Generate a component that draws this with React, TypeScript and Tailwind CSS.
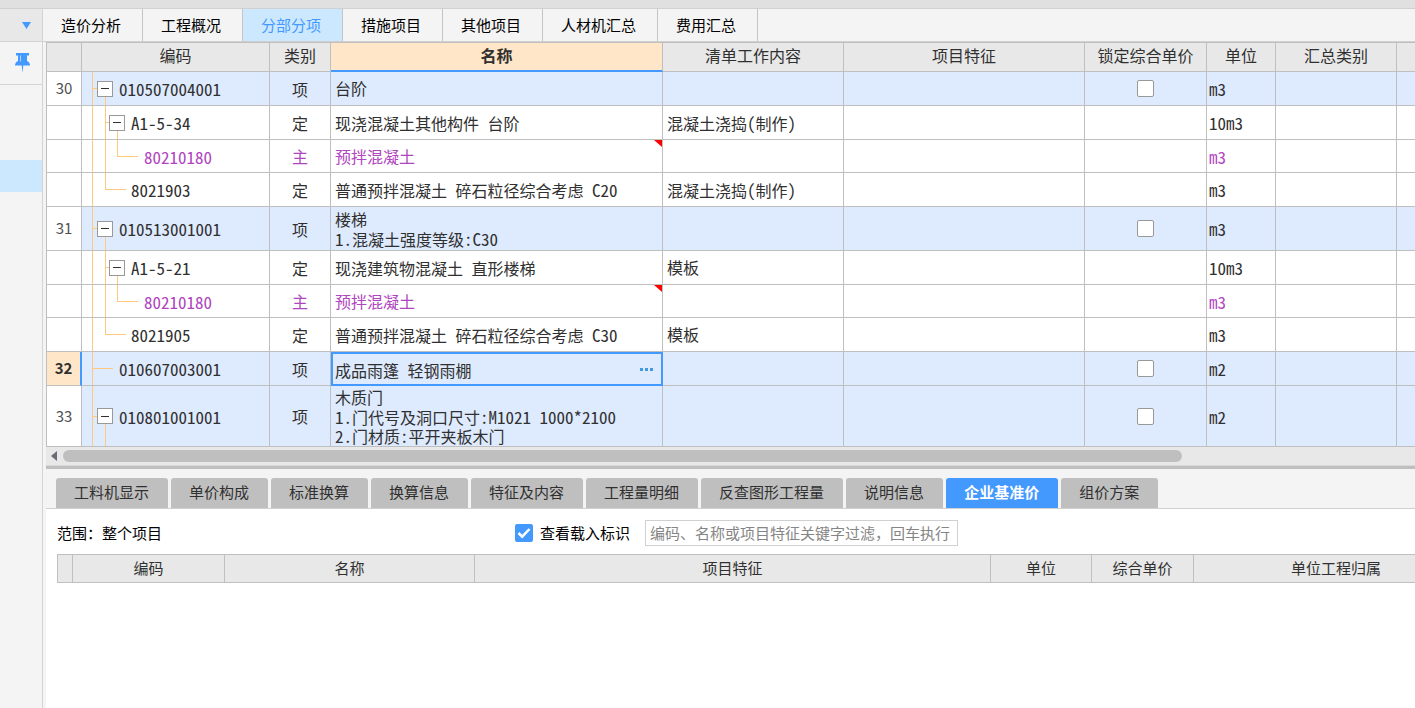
import { useState } from 'react';
import clsx from 'clsx';

interface BillRow {
  no?: string;
  code: string;
  level: 0 | 1 | 2;
  leaf?: boolean;
  last?: boolean;
  type: string;
  name: string[];
  work?: string;
  unit: string;
  flagged?: boolean;
  height: string;
}

const rows: BillRow[] = [
  { no: '30', code: '010507004001', level: 0, type: '项', name: ['台阶'], unit: 'm3', height: 'h-[34px]' },
  { code: 'A1-5-34', level: 1, type: '定', name: ['现浇混凝土其他构件 台阶'], work: '混凝土浇捣(制作)', unit: '10m3', height: 'h-[34px]' },
  { code: '80210180', level: 2, leaf: true, last: true, type: '主', name: ['预拌混凝土'], unit: 'm3', flagged: true, height: 'h-[33px]' },
  { code: '8021903', level: 1, leaf: true, last: true, type: '定', name: ['普通预拌混凝土 碎石粒径综合考虑 C20'], work: '混凝土浇捣(制作)', unit: 'm3', height: 'h-[34px]' },
  { no: '31', code: '010513001001', level: 0, type: '项', name: ['楼梯', '1.混凝土强度等级:C30'], unit: 'm3', height: 'h-[44px]' },
  { code: 'A1-5-21', level: 1, type: '定', name: ['现浇建筑物混凝土 直形楼梯'], work: '模板', unit: '10m3', height: 'h-[34px]' },
  { code: '80210180', level: 2, leaf: true, last: true, type: '主', name: ['预拌混凝土'], unit: 'm3', flagged: true, height: 'h-[33px]' },
  { code: '8021905', level: 1, leaf: true, last: true, type: '定', name: ['普通预拌混凝土 碎石粒径综合考虑 C30'], work: '模板', unit: 'm3', height: 'h-[34px]' },
  { no: '32', code: '010607003001', level: 0, leaf: true, type: '项', name: ['成品雨篷 轻钢雨棚'], unit: 'm2', height: 'h-[34px]' },
  { no: '33', code: '010801001001', level: 0, type: '项', name: ['木质门', '1.门代号及洞口尺寸:M1021 1000*2100', '2.门材质:平开夹板木门'], unit: 'm2', height: 'h-[61px]' },
];

const mainTabs = ['造价分析', '工程概况', '分部分项', '措施项目', '其他项目', '人材机汇总', '费用汇总'];

const detailTabs = [
  '工料机显示',
  '单价构成',
  '标准换算',
  '换算信息',
  '特征及内容',
  '工程量明细',
  '反查图形工程量',
  '说明信息',
  '企业基准价',
  '组价方案',
];

const indent = ['pl-[15px]', 'pl-[27px]', 'pl-[40px]'];
const lineX = [10, 23, 35];

// Chinese and half-width runs are set at different sizes
const GridText = ({ text }: { text: string }) => (
  <>
    {text.split(/([\x20-\x7e]+)/).map((part, i) => (
      <span key={i} className={i % 2 ? 'text-[17px]' : 'text-base leading-[19px]'}>
        {part}
      </span>
    ))}
  </>
);

const TreeLines = ({ row }: { row: BillRow }) => {
  const x = lineX[row.level];
  return (
    <svg className="absolute inset-0 h-full w-full" stroke="#ffc880" shapeRendering="crispEdges" aria-hidden="true">
      <line x1="10.5" x2="10.5" y1="0" y2="100%" />
      {row.level === 2 && <line x1="23.5" x2="23.5" y1="0" y2="100%" />}
      {row.level > 0 && <line x1={x + 0.5} x2={x + 0.5} y1="0" y2={row.last ? '50%' : '100%'} />}
      {!row.leaf && <line x1={lineX[row.level + 1] + 0.5} x2={lineX[row.level + 1] + 0.5} y1="50%" y2="100%" />}
      <line x1={x} x2={x + (row.leaf ? 21 : 6)} y1="50%" y2="50%" />
    </svg>
  );
};

const GridCheckbox = ({ label }: { label: string }) => (
  <input
    type="checkbox"
    aria-label={label}
    className="block mx-auto size-[17px] appearance-none rounded-[2px] border border-[#999] bg-white checked:bg-[#4499ff]"
  />
);

const BillTable = () => {
  const [selected, setSelected] = useState('32');
  const th = 'border-r border-b border-[#bfbfbf] bg-[#e8e8e8] pb-[3px] font-normal';
  const td = 'border-r border-b border-[#bfbfbf]';

  return (
    <table className="w-full table-fixed border-separate border-spacing-0 border-t border-l border-[#bfbfbf] bg-white font-['Noto_Sans_Mono_CJK_SC','Noto_Sans_CJK_SC',sans-serif] text-base leading-[19px] text-[#303030]">
      <colgroup>
        <col className="w-[35px]" />
        <col className="w-[188px]" />
        <col className="w-[61px]" />
        <col className="w-[332px]" />
        <col className="w-[181px]" />
        <col className="w-[241px]" />
        <col className="w-[122px]" />
        <col className="w-[69px]" />
        <col className="w-[121px]" />
        <col />
      </colgroup>
      <thead>
        <tr className="h-[29px]">
          <th className={th} />
          <th className={th}>编码</th>
          <th className={th}>类别</th>
          <th className="border-r border-b-2 border-r-[#bfbfbf] border-b-[#4499ff] bg-[#ffe6c8] pb-[3px] font-bold">
            名称
          </th>
          <th className={th}>清单工作内容</th>
          <th className={th}>项目特征</th>
          <th className={th}>锁定综合单价</th>
          <th className={th}>单位</th>
          <th className={th}>汇总类别</th>
          <th className="border-b border-[#bfbfbf] bg-[#e8e8e8]" />
        </tr>
      </thead>
      <tbody>
        {rows.map((row, i) => {
          const active = row.no !== undefined && row.no === selected;
          return (
            <tr
              key={i}
              onClick={() => row.no && setSelected(row.no)}
              className={clsx(row.height, row.level === 0 && 'bg-[#deeafe]', row.level === 2 && 'text-[#b045c0]')}
            >
              <td
                className={clsx(
                  "pb-[2px] text-center font-['Noto_Sans_CJK_SC',sans-serif] text-[15px]",
                  active
                    ? 'border-r-2 border-b border-r-[#4499ff] border-b-[#bfbfbf] bg-[#ffe6c8] font-bold'
                    : 'border-r border-b border-[#bfbfbf] bg-white text-[#505050]',
                )}
              >
                {row.no}
              </td>
              <td className={clsx(td, 'relative')}>
                <TreeLines row={row} />
                <div className={clsx('relative flex items-center gap-[6px]', indent[row.level])}>
                  {row.leaf ? (
                    <span className="size-4" />
                  ) : (
                    <button
                      aria-label={`折叠 ${row.code}`}
                      className="flex size-4 items-center justify-center border border-[#999] bg-white"
                    >
                      <span className="h-px w-2 bg-[#303030]" />
                    </button>
                  )}
                  <span className="pt-px">
                    <GridText text={row.code} />
                  </span>
                </div>
              </td>
              <td className={clsx(td, 'pt-px text-center')}>{row.type}</td>
              <td
                className={clsx(
                  'relative',
                  active ? 'border-2 border-[#4499ff] pl-[2px]' : 'border-r border-b border-[#bfbfbf] pl-1',
                )}
              >
                {row.name.map((line) => (
                  <div key={line} className="h-[19px] whitespace-nowrap">
                    <GridText text={line} />
                  </div>
                ))}
                {row.flagged && (
                  <svg className="absolute top-0 right-0 h-[7px] w-2" viewBox="0 0 8 7" aria-hidden="true">
                    <path d="M0 0h8v7z" fill="#f00" />
                  </svg>
                )}
                {active && (
                  <button aria-label="更多" className="absolute inset-y-0 right-2 flex items-center gap-[2px]">
                    <span className="size-[3px] bg-[#4499dd]" />
                    <span className="size-[3px] bg-[#4499dd]" />
                    <span className="size-[3px] bg-[#4499dd]" />
                  </button>
                )}
              </td>
              <td className={clsx(td, 'pl-1')}>{row.work && <GridText text={row.work} />}</td>
              <td className={td} />
              <td className={td}>{row.level === 0 && <GridCheckbox label={`锁定综合单价 ${row.no}`} />}</td>
              <td className={clsx(td, 'pt-px pl-[2px]')}>
                <GridText text={row.unit} />
              </td>
              <td className={td} />
              <td className="border-b border-[#bfbfbf]" />
            </tr>
          );
        })}
      </tbody>
    </table>
  );
};

const SideBar = () => (
  <aside className="flex w-[43px] shrink-0 flex-col border-r border-[#d4d4d4] bg-[#f4f4f4]">
    <button
      aria-label="展开"
      className="flex h-[33px] items-center justify-end border-b border-[#d4d4d4] bg-[#e8e8e8] pr-[11px]"
    >
      <svg width="9" height="7" viewBox="0 0 9 7" fill="#4499ff" aria-hidden="true">
        <path d="M0 0h9L4.5 7z" />
      </svg>
    </button>
    <button aria-label="固定" className="flex h-[43px] items-center justify-end border-b border-[#d4d4d4] pr-3">
      <svg width="15" height="20" viewBox="0 0 15 20" fill="#4499ff" aria-hidden="true">
        <path d="M1 0h13v2.5h-2v5.500c2 .8 3 2.200 3 4.500H8.300L7.500 20 6.700 12.500H0c0-2.300 1-3.700 3-4.500V2.500H1z" />
        <path d="M5.500 2.500v6" stroke="#b5d6ff" strokeWidth="1" />
      </svg>
    </button>
    <div className="mt-[75px] h-8 bg-[#cce8ff]" />
  </aside>
);

const DetailPanel = () => {
  const [tab, setTab] = useState('企业基准价');
  const th = 'border-r border-b border-[#bfbfbf] pb-[2px] font-normal';

  return (
    <section className="flex grow flex-col">
      <nav className="flex gap-[3px] border-b border-[#d0d0d0] bg-[#f4f4f4] pt-[9px] pl-[10px]">
        {detailTabs.map((name) => (
          <button
            key={name}
            onClick={() => setTab(name)}
            className={clsx(
              'h-[30px] rounded-t-[3px] pr-[19px] pb-[2px] pl-[18px] whitespace-nowrap',
              name === tab ? 'bg-[#4499ff] font-bold text-white' : 'bg-[#bfbfbf] text-[#303030]',
            )}
          >
            {name}
          </button>
        ))}
      </nav>
      <div className="grow bg-white pl-[11px]">
        <div className="flex h-[45px] items-center pt-[3px]">
          <p className="w-[458px] pb-px text-black">范围：整个项目</p>
          <span className="relative mr-[7px] size-[18px]">
            <input
              id="show-mark"
              type="checkbox"
              defaultChecked
              className="peer block size-[18px] appearance-none rounded-[2px] border border-[#4499ff] bg-white checked:bg-[#4499ff]"
            />
            <svg
              className="pointer-events-none absolute inset-0 hidden peer-checked:block"
              viewBox="0 0 18 18"
              fill="none"
              stroke="#fff"
              strokeWidth="2.5"
              aria-hidden="true"
            >
              <path d="M3.500 9l3.700 3.700L14.500 5" />
            </svg>
          </span>
          <label htmlFor="show-mark" className="mr-[15px] pb-px text-black">
            查看载入标识
          </label>
          <input
            type="text"
            aria-label="过滤"
            placeholder="编码、名称或项目特征关键字过滤，回车执行"
            className="h-[26px] w-[313px] border border-[#d0d0d0] bg-white px-1 pb-[2px] placeholder:text-[#858585]"
          />
        </div>
        <div className="overflow-hidden">
          <table className="w-[1422px] min-w-full table-fixed border-separate border-spacing-0 border-t border-l border-[#bfbfbf] bg-[#e8e8e8] text-[#303030]">
            <colgroup>
              <col className="w-[15px]" />
              <col className="w-[152px]" />
              <col className="w-[250px]" />
              <col className="w-[516px]" />
              <col className="w-[101px]" />
              <col className="w-[102px]" />
              <col />
            </colgroup>
            <thead>
              <tr className="h-[28px]">
                <th className={th} />
                <th className={th}>编码</th>
                <th className={th}>名称</th>
                <th className={th}>项目特征</th>
                <th className={th}>单位</th>
                <th className={th}>综合单价</th>
                <th className={th}>单位工程归属</th>
              </tr>
            </thead>
          </table>
        </div>
      </div>
    </section>
  );
};

export default function App() {
  const [tab, setTab] = useState('分部分项');

  return (
    <div className="flex min-h-screen flex-col overflow-hidden bg-[#f4f4f4] font-['Noto_Sans_CJK_SC',sans-serif] text-[15px] leading-5">
      <div className="h-2 bg-[#e0e0e0]" />
      <div className="flex grow border-t border-[#d0d0d0]">
        <SideBar />
        <main className="flex min-w-0 grow flex-col">
          <nav className="flex h-[33px] border-b border-[#d0d0d0]">
            {mainTabs.map((name) => (
              <button
                key={name}
                onClick={() => setTab(name)}
                className={clsx(
                  'border-r border-[#c4c4c4] pr-[21px] pl-[18px] whitespace-nowrap',
                  name === tab ? 'bg-[#cce8ff] text-[#4499ff]' : 'text-black',
                )}
              >
                {name}
              </button>
            ))}
          </nav>
          <div className="flex grow flex-col pl-[3px]">
            <BillTable />
            <div className="flex h-[18px] items-center bg-[#e8e8e8] pl-[5px]">
              <svg width="6" height="10" viewBox="0 0 6 10" fill="#6b6b75" aria-hidden="true">
                <path d="M6 0v10L0 5z" />
              </svg>
              <div className="ml-[6px] h-3 w-[82%] rounded-full bg-[#bfbfbf]" />
            </div>
            <div className="h-1 border-t border-[#d8d8d8] bg-[#bfbfbf]" />
            <DetailPanel />
          </div>
        </main>
      </div>
    </div>
  );
}
